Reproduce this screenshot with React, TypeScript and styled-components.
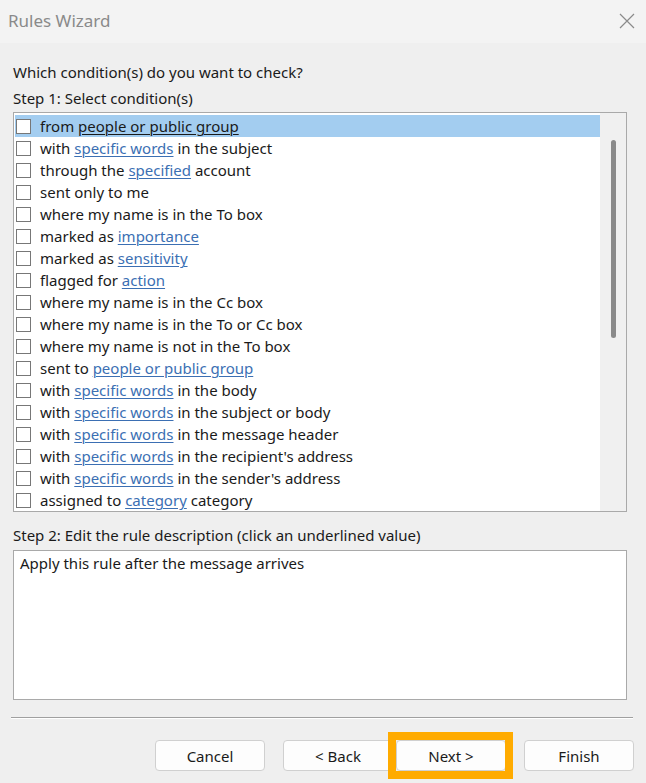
import React from "react";
import styled, { createGlobalStyle } from "styled-components";

const GlobalStyle = createGlobalStyle`
  html, body {
    margin: 0;
    padding: 0;
    background: #efefef;
  }
  body {
    font-family: "Noto Sans", "Open Sans", sans-serif;
    font-size: 15px;
    color: #1a1a1a;
  }
`;

type Part = string | { link: string };

const conditions: Part[][] = [
  ["from ", { link: "people or public group" }],
  ["with ", { link: "specific words" }, " in the subject"],
  ["through the ", { link: "specified" }, " account"],
  ["sent only to me"],
  ["where my name is in the To box"],
  ["marked as ", { link: "importance" }],
  ["marked as ", { link: "sensitivity" }],
  ["flagged for ", { link: "action" }],
  ["where my name is in the Cc box"],
  ["where my name is in the To or Cc box"],
  ["where my name is not in the To box"],
  ["sent to ", { link: "people or public group" }],
  ["with ", { link: "specific words" }, " in the body"],
  ["with ", { link: "specific words" }, " in the subject or body"],
  ["with ", { link: "specific words" }, " in the message header"],
  ["with ", { link: "specific words" }, " in the recipient's address"],
  ["with ", { link: "specific words" }, " in the sender's address"],
  ["assigned to ", { link: "category" }, " category"],
];

function App() {
  return (
    <>
      <GlobalStyle />
      <Dialog>
        <TitleBar>
          <Title>Rules Wizard</Title>
          <CloseButton aria-label="Close">
            <svg width="16" height="16" viewBox="0 0 16 16">
              <path d="M1 1 L15 15 M15 1 L1 15" stroke="#8a8a8a" strokeWidth="1.2" fill="none" />
            </svg>
          </CloseButton>
        </TitleBar>
        <Body>
          <Label $top={19}>Which condition(s) do you want to check?</Label>
          <Label $top={6}>Step 1: Select condition(s)</Label>
          <ListBox>
            <Rows>
              {conditions.map((parts, i) => (
                <Row key={i} $selected={i === 0}>
                  <CheckBox />
                  <RowText>
                    {parts.map((p, j) =>
                      typeof p === "string" ? (
                        <span key={j}>{p}</span>
                      ) : (
                        <Link key={j} $selected={i === 0}>
                          {p.link}
                        </Link>
                      )
                    )}
                  </RowText>
                </Row>
              ))}
            </Rows>
            <ScrollTrack>
              <Thumb />
            </ScrollTrack>
          </ListBox>
          <Label $top={13}>Step 2: Edit the rule description (click an underlined value)</Label>
          <Description>Apply this rule after the message arrives</Description>
          <Separator />
          <Buttons>
            <Button>Cancel</Button>
            <Pair>
              <Button>&lt; Back</Button>
              <Button $focus>Next &gt;</Button>
            </Pair>
            <Button>Finish</Button>
          </Buttons>
        </Body>
      </Dialog>
    </>
  );
}

export default App;

const Dialog = styled.div`
  width: 646px;
  height: 783px;
  display: flex;
  flex-direction: column;
  background: #efefef;
  overflow: hidden;
`;

const TitleBar = styled.div`
  height: 43px;
  flex: none;
  background: #f3f3f3;
  display: flex;
  align-items: center;
  justify-content: space-between;
  padding: 0 11px 0 8px;
`;

const Title = styled.div`
  font-size: 17px;
  color: #8a8a8a;
  margin-top: -3px;
`;

const CloseButton = styled.div`
  display: flex;
  margin-top: -2px;
`;

const Body = styled.div`
  display: flex;
  flex-direction: column;
  padding: 0 19px 0 13px;
`;

const Label = styled.div<{ $top: number }>`
  margin-top: ${(p) => p.$top}px;
  line-height: 20px;
`;

const ListBox = styled.div`
  margin-top: 4px;
  height: 400px;
  border: 1px solid #a9a9a9;
  background: #ffffff;
  display: flex;
  box-sizing: border-box;
  padding: 2px 0 0 1px;
`;

const Rows = styled.div`
  flex: 1;
  display: flex;
  flex-direction: column;
`;

const Row = styled.div<{ $selected?: boolean }>`
  height: 22px;
  flex: none;
  display: flex;
  align-items: center;
  background: ${(p) => (p.$selected ? "#a3cdf0" : "transparent")};
`;

const CheckBox = styled.span`
  width: 13px;
  height: 13px;
  border: 1px solid #777777;
  background: #ffffff;
  margin-left: 1px;
  flex: none;
`;

const RowText = styled.span`
  margin-left: 9px;
  white-space: nowrap;
`;

const Link = styled.span<{ $selected?: boolean }>`
  color: ${(p) => (p.$selected ? "#1a1a1a" : "#3b6fb3")};
  text-decoration: underline;
  text-underline-offset: 2px;
  text-decoration-thickness: 1px;
`;

const ScrollTrack = styled.div`
  width: 26px;
  margin-top: -2px;
  background: #f0f0f0;
  display: flex;
  justify-content: center;
  padding-top: 27px;
`;

const Thumb = styled.div`
  width: 5px;
  height: 198px;
  border-radius: 3px;
  background: #8a8a8a;
  margin-left: 1px;
`;

const Description = styled.div`
  margin-top: 5px;
  height: 150px;
  box-sizing: border-box;
  border: 1px solid #a9a9a9;
  background: #ffffff;
  padding: 2px 6px;
  line-height: 20px;
`;

const Separator = styled.div`
  margin: 17px -6px 0 -2px;
  height: 1px;
  background: #a0a0a0;
  border-bottom: 1px solid #ffffff;
`;

const Buttons = styled.div`
  margin-top: 21px;
  display: flex;
  justify-content: flex-end;
  gap: 18px;
  margin-right: -7px;
`;

const Pair = styled.div`
  display: flex;
  gap: 3px;
`;

const Button = styled.button<{ $focus?: boolean }>`
  position: relative;
  width: 110px;
  height: 31px;
  box-sizing: border-box;
  font-family: inherit;
  font-size: 15px;
  color: #1a1a1a;
  background: #fdfdfd;
  border: 1px solid #d0d0d0;
  border-radius: 4px;
  padding: 0;

  &::after {
    content: "";
    display: ${(p) => (p.$focus ? "block" : "none")};
    position: absolute;
    inset: -9px -8px -9px -9px;
    border: 8px solid #ffab00;
    pointer-events: none;
  }
`;
